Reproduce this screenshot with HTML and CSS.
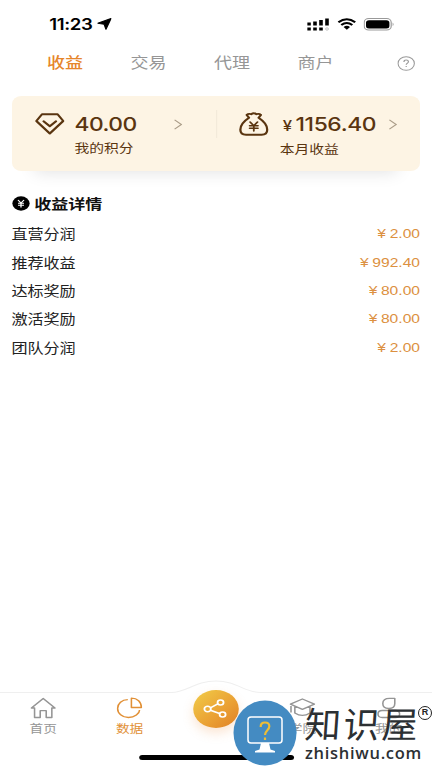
FILE: index.html
```html
<!DOCTYPE html>
<html lang="zh-CN">
<head>
<meta charset="utf-8">
<title>收益</title>
<link rel="stylesheet" href="styles.css">
</head>
<body>
<div class="app">
  <header class="status">
    <span class="time">11:23</span>
    <svg class="arrow" width="12" height="12" viewBox="0 0 12 12"><path d="M11.500.5 7.300 11.300 5.800 6.300.5 5.200z" stroke="#000" stroke-width="1" stroke-linejoin="round"/></svg>
    <svg class="signal" width="19" height="13" viewBox="0 0 19 13"><path d="M0 4.500h3v3H0zM5 3.500h3v4H5zM10 2h3v5.500h-3zM15 .5h3v7h-3zM0 9.500h3v3H0zM5 9.500h3v3H5zM10 9.500h3v3h-3z"/><circle cx="16.500" cy="11" r="1.200" fill="none" stroke="#aaa" stroke-width=".6"/></svg>
    <svg class="wifi" width="16" height="12" viewBox="0 0 16 12"><path d="M1 4.300Q8-1.900 15 4.300M3.400 7Q8 3 12.600 7" fill="none" stroke="#000" stroke-width="1.900"/><path d="M5.300 9Q8 6.700 10.700 9L8 11.800z"/></svg>
    <svg class="battery" width="26" height="13" viewBox="0 0 26 13"><rect x=".5" y=".6" width="22.500" height="11.400" rx="3.800" fill="none" stroke="#999"/><rect x="2" y="2.200" width="19.500" height="8.200" rx="2.500"/><path d="M24.200 4.500q1.600 1.800 0 3.600z" fill="#999"/></svg>
  </header>
  <nav class="tabs">
    <span class="tab active">收益</span><span class="tab">交易</span><span class="tab">代理</span><span class="tab">商户</span>
    <svg class="help" width="15" height="15" viewBox="0 0 15 15" fill="none" stroke="#999"><circle cx="7.500" cy="7.500" r="6.800" stroke-width=".9"/><path d="M5.600 6Q5.700 4.100 7.500 4.100T9.400 5.800C9.400 7 7.500 7.200 7.500 8.800M7.500 9.900v1.200"/></svg>
  </nav>
  <section class="card">
    <div class="half">
      <svg class="gem" width="25" height="22" viewBox="0 0 25 22"><path d="M6 1.200h13L23.700 8 12.500 20.500 1.300 8zM7.300 8.300l5.200 4.900 5.200-4.900"/></svg>
      <div class="sum"><strong>40.00</strong><span>我的积分</span></div>
      <svg class="chev" width="7" height="11" viewBox="0 0 7 11"><path d="M.5.800 6.200 5.500.5 10.200"/></svg>
    </div>
    <div class="half right">
      <svg class="gem" width="25" height="24" viewBox="0 0 25 24"><path d="M8.500 5.800 6.600 2.900Q8 1.300 10.300 2.200 12.500.2 14.700 2.200 17 1.300 18.400 2.900L16.500 5.800M8.500 5.800Q1.300 11.500 1.300 17.700 1.300 22.700 6 22.700H19Q23.700 22.700 23.700 17.700 23.700 11.500 16.500 5.800"/><path class="thin" d="m9.400 10 3.100 3.700L15.600 10M9 13.700h7M9 16.200h7M12.500 13.700V19"/></svg>
      <div class="sum"><strong><small>¥</small>1156.40</strong><span>本月收益</span></div>
      <svg class="chev" width="7" height="11" viewBox="0 0 7 11"><path d="M.5.800 6.200 5.500.5 10.200"/></svg>
    </div>
  </section>
  <main class="details">
    <h2><svg width="15" height="15" viewBox="0 0 15 15"><circle cx="7.500" cy="7.500" r="7.200"/><path d="m5 4 2.500 3L10 4M5 7.200h5M5 9.200h5M7.500 7v4.500" fill="none" stroke="#fff" stroke-width="1.100"/></svg>收益详情</h2>
    <div class="row"><span>直营分润</span><b><i>¥</i>2.00</b></div>
    <div class="row"><span>推荐收益</span><b><i>¥</i>992.40</b></div>
    <div class="row"><span>达标奖励</span><b><i>¥</i>80.00</b></div>
    <div class="row"><span>激活奖励</span><b><i>¥</i>80.00</b></div>
    <div class="row"><span>团队分润</span><b><i>¥</i>2.00</b></div>
  </main>
  <footer class="dock">
    <svg class="edge" width="360" height="16" viewBox="0 0 360 16"><path d="M0 12.500H143C155 12.500 163 1 180 1S204 12.500 217 12.500H360" fill="none" stroke="#efefef"/></svg>
    <div class="item"><svg width="22" height="22" viewBox="0 0 22 22"><path d="M3.800 20.500V11H1.200L11 1.500 20.800 11h-2.600v9.500h-4.700v-6.800h-5v6.800z"/></svg><span>首页</span></div>
    <div class="item on"><svg width="22" height="22" viewBox="0 0 22 22"><path d="M9.500 2.700C4.500 2.700 1 6.700 1 11.500s3.700 9 9 9 9.300-4 9.300-7.500M12.500 1.200V10.500h8.300C20.800 4.800 17.500 1.200 12.500 1.200z"/></svg><span>数据</span></div>
    <div class="share"><svg width="22" height="20" viewBox="0 0 22 20"><path d="M6.300 8.800 12.500 4.800M6.300 11.200 14 14.500"/><circle cx="4" cy="10" r="2.700"/><circle cx="14.800" cy="3.500" r="2.500"/><circle cx="16.500" cy="15.500" r="2.500"/></svg></div>
    <div class="item"><svg width="22" height="22" viewBox="0 0 22 22"><path d="M11 2 21 7.200 11 12.300 1 7.200zM4.700 9.500V16Q11 20.800 17.300 16V9.500M1.500 9v6.500"/></svg><span>学院</span></div>
    <div class="item"><svg width="22" height="22" viewBox="0 0 22 22"><path d="M6 6.500Q6 1.300 11.500 1.300H16V6.500Q16 11.500 11 11.500T6 6.500zM5.500 13.500H16.500Q20 13.500 20 17T16.500 20.500H5.500Q2 20.500 2 17T5.500 13.500z"/></svg><span>我的</span></div>
  </footer>
  <div class="home-bar"></div>
</div>
<div class="watermark">
  <svg class="badge" width="64" height="66" viewBox="0 0 64 66"><ellipse cx="32" cy="33" rx="31.500" ry="32.500" fill="#448bc2"/><rect x="15" y="17" width="34" height="26" rx="3" fill="none" stroke="#fff" stroke-width="1.500"/><path d="M28 43h8l1.500 6.500 4.500 1.500v1.500H22V51l4.500-1.500z" fill="#fff"/><path d="M27.700 27Q27.500 22.500 32 22.500T36.300 26.500C36.300 30 32 30.500 32 35M32 37.500v2.500" fill="none" stroke="#efbd35" stroke-width="2.200"/></svg>
  <div class="brand"><span class="name">知识屋</span><span class="site">zhishiwu.com</span></div>
  <span class="reg">R</span>
</div>
</body>
</html>
```
FILE: styles.css
```css
* { box-sizing: border-box; }
body {
  margin: 0;
  width: 432px;
  height: 768px;
  overflow: hidden;
  position: relative;
  background: #fff;
  font-family: "Liberation Sans", "Noto Sans CJK SC", sans-serif;
}
/* The phone canvas is 360 units wide, stretched to the window. */
.app {
  width: 360px;
  height: 768px;
  display: flex;
  flex-direction: column;
  transform: scaleX(1.2);
  transform-origin: 0 0;
}
.status { height: 47px; display: flex; align-items: center; padding: 1px 31px 0 41px; flex: none; }
.time { font: 600 15.5px/20px Inter, sans-serif; letter-spacing: -.3px; width: 40px; white-space: nowrap; margin-top: 1px; }
.arrow { margin-left: 0; }
.signal { margin-left: auto; }
.wifi { margin-left: 6px; }
.battery { margin-left: 6px; }
.tabs { height: 32px; display: flex; align-items: center; padding-left: 19.3px; flex: none; }
.tab { width: 69.6px; text-align: center; font-size: 15px; line-height: 24px; color: #969696; }
.tab.active { color: #e6852b; font-weight: 500; }
.help { margin-left: 33.200px; }
.card {
  margin: 17px 10px 0;
  height: 75px;
  flex: none;
  display: flex;
  background: #fdf4e4;
  border-radius: 8px;
  box-shadow: 0 20px 16px -19px rgba(0, 0, 0, .12);
}
.half { width: 170px; display: flex; align-items: flex-start; padding: 17px 28px 0 18.500px; }
.half.right { padding: 16px 19.500px 0 19px; background: linear-gradient(#f3eada, #f3eada) 0 14px / 1px 28px no-repeat; }
.gem { fill: none; stroke: #5a3510; stroke-width: 1.9; stroke-linejoin: round; stroke-linecap: round; flex: none; }
.gem .thin { stroke-width: 1.500; }
.sum { display: flex; flex-direction: column; margin-left: 8.500px; color: #5a3510; }
.right .sum { margin: 1px 0 0 9.200px; }
.sum strong { font: 500 19px/24px Inter, sans-serif; letter-spacing: -.4px; white-space: nowrap; }
.right .sum strong { padding-left: 2.500px; letter-spacing: -.3px; }
.sum small { font-size: 14px; margin-right: 3px; }
.sum span { font-size: 12.3px; line-height: 20px; margin-top: 2px; }
.chev { margin: 6px 0 0 auto; fill: none; stroke: #aa9c88; stroke-width: 1; flex: none; }
.right .chev { margin-top: 7px; }
.details { padding: 18px 10px 0; flex: 1; }
.details h2 { margin: 0 0 2px; height: 28px; display: flex; align-items: center; gap: 4px; font-size: 14.200px; font-weight: 600; color: #111; }
.details h2 svg { margin-left: -.5px; }
.row { height: 28.400px; display: flex; justify-content: space-between; align-items: center; font-size: 13.400px; color: #222; }
.row span { margin-left: -.5px; }
.row b { font-weight: 400; font-size: 13px; color: #dc9040; padding-top: 1px; }
.row i { font-style: normal; margin-right: 3px; }
.dock { height: 62px; display: flex; position: relative; padding-top: 17px; flex: none; }
.edge { position: absolute; left: 0; top: 0; }
.item { width: 72px; display: flex; flex-direction: column; align-items: center; color: #959595; font-size: 11.400px; line-height: 18px; }
.item svg { fill: none; stroke: currentColor; stroke-width: 1.300; stroke-linejoin: round; }
.item span { margin-top: 1px; }
.item.on { color: #e19036; }
.share {
  width: 38px;
  height: 38px;
  margin: -7px 17px 0;
  border-radius: 50%;
  display: flex;
  align-items: center;
  justify-content: center;
  background: linear-gradient(135deg, #f1cd48, #ea9f33 60%, #df7f25);
  box-shadow: 0 5px 10px rgba(240, 150, 80, .25);
}
.share svg { fill: none; stroke: #fff; stroke-width: 1.500; }
.home-bar { width: 129px; height: 5px; margin: 13px 0 8px 115.500px; border-radius: 3px; background: #000; flex: none; }
.watermark { position: absolute; left: 233px; top: 700px; width: 199px; height: 68px; display: flex; }
.badge { flex: none; }
.brand { margin-left: 8px; display: flex; flex-direction: column; color: #2c3033; white-space: nowrap; }
.name { font-family: "Noto Sans CJK SC", sans-serif; font-weight: 400; font-size: 36px; line-height: 44px; letter-spacing: 2.500px; transform: skewX(-4deg); }
.site { font: 600 16.500px/17px "Open Sans", sans-serif; letter-spacing: .7px; }
.reg { position: absolute; right: 0; top: 6px; width: 14px; height: 14px; border: 1.500px solid #222; border-radius: 50%; font: 700 9px/11px "Liberation Sans", sans-serif; text-align: center; color: #222; }
```
